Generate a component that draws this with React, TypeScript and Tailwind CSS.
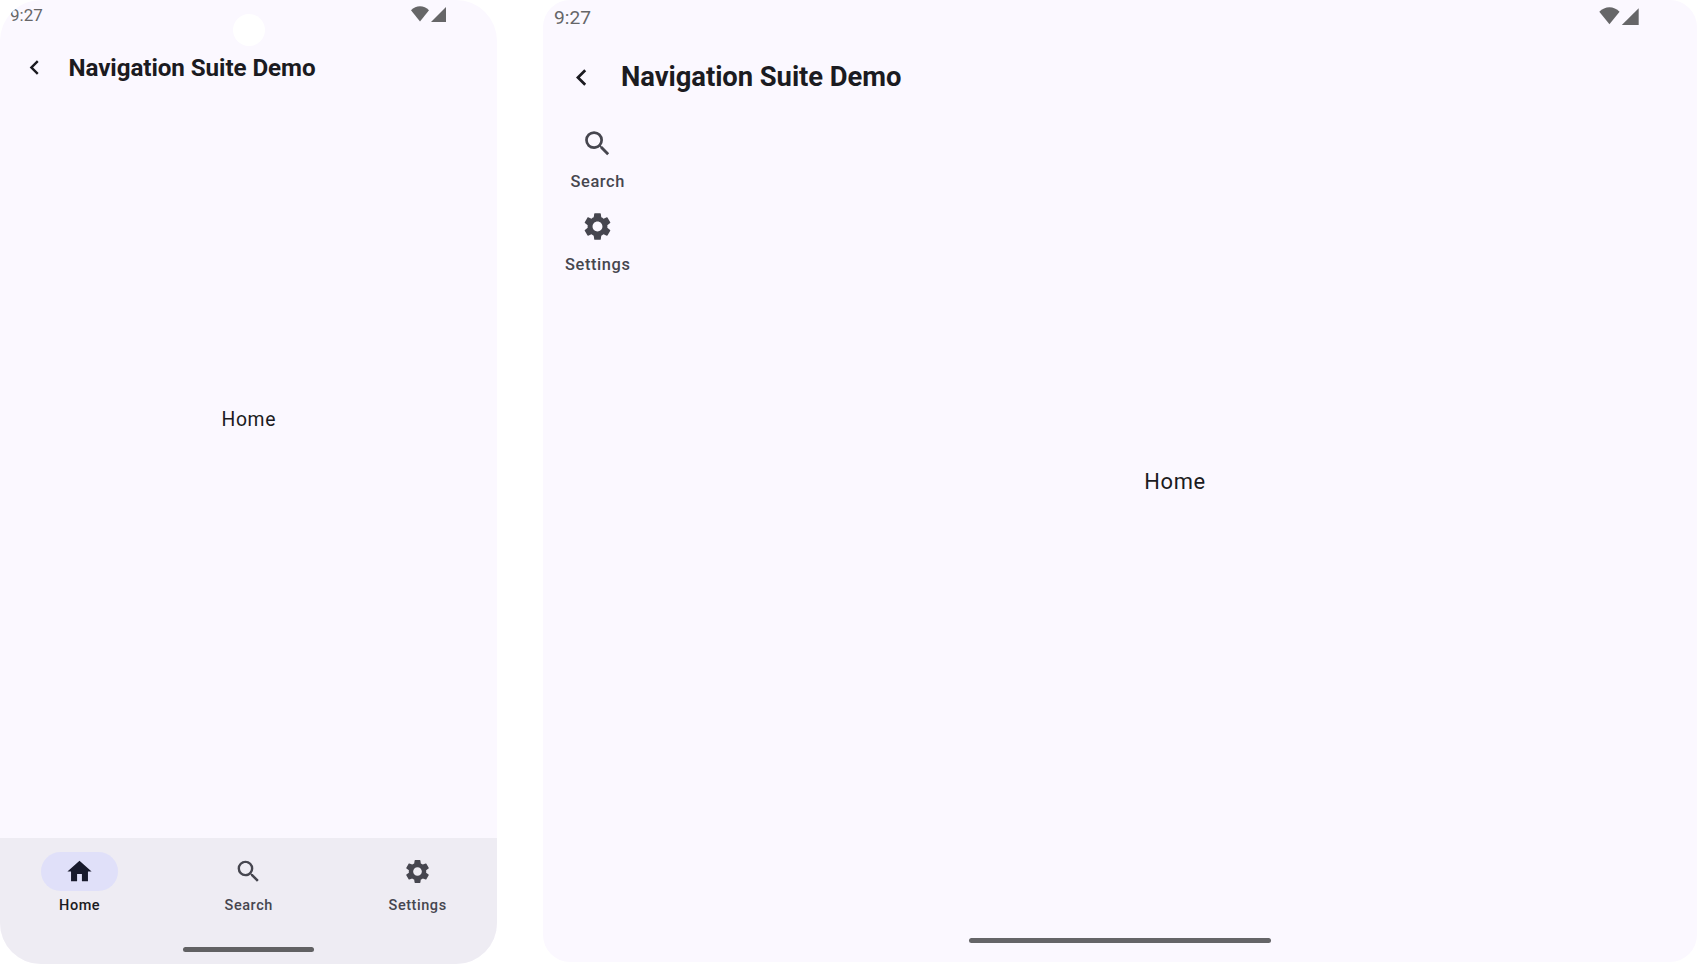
import { MdChevronLeft, MdHome, MdSearch, MdSettings } from "react-icons/md";

function StatusIcons({ className }: { className: string }) {
  return (
    <svg viewBox="0 0 35 16" className={className} fill="#666668" aria-hidden="true">
      <path d="M0 4.3C5-1.2 13-1.2 18 4.3L9 15.4z" />
      <path d="M35 1v15H20z" />
    </svg>
  );
}

function Phone() {
  return (
    <section className="relative flex h-[963.5px] w-[497px] shrink-0 flex-col overflow-hidden rounded-[41px] bg-[#fbf8ff]">
      <div className="absolute top-[14px] left-[232.5px] size-[32px] rounded-full bg-white" />
      <header className="flex h-[30px] shrink-0 items-center justify-between pr-[51.5px] pl-[10px]">
        <span className="text-[17px] leading-[30px] text-[#666668]">9:27</span>
        <StatusIcons className="mb-[3px] h-[16px] w-[35px]" />
      </header>
      <div className="flex h-[75px] shrink-0 items-center pl-[19.5px]">
        <MdChevronLeft className="size-[29px] text-[#1b1b21]" />
        <h1 className="ml-[20px] pt-px text-[24.2px] font-bold tracking-[-0.07px] whitespace-nowrap">
          Navigation Suite Demo
        </h1>
      </div>
      <main className="flex flex-1 items-center justify-center pb-[102px]">
        <p className="pl-[0.6px] text-[19.33px] tracking-[0.6px]">Home</p>
      </main>
      <nav className="flex h-[125.5px] shrink-0 flex-col bg-[#eeecf3] pt-[14px]">
        <div className="grid grid-cols-3 gap-[9.67px] text-[14.5px] leading-[20px] font-medium tracking-[0.55px] text-[#46464f]">
          <div className="flex flex-col items-center text-[#1b1b21]">
            <span className="flex h-[39px] w-[77px] items-center justify-center rounded-full bg-[#e0e0f9]">
              <MdHome className="size-[29px] text-[#181a2c]" />
            </span>
            <span className="mt-[5px]">Home</span>
          </div>
          <div className="flex flex-col items-center">
            <span className="flex h-[39px] items-center">
              <MdSearch className="size-[29px]" />
            </span>
            <span className="mt-[5px] pl-[0.5px]">Search</span>
          </div>
          <div className="flex flex-col items-center">
            <span className="flex h-[39px] items-center">
              <MdSettings className="size-[29px]" />
            </span>
            <span className="mt-[5px] pl-[0.5px]">Settings</span>
          </div>
        </div>
        <div className="mx-auto mt-[31px] h-[5px] w-[131px] rounded-full bg-[#616163]" />
      </nav>
    </section>
  );
}

function Tablet() {
  return (
    <section className="flex h-[962px] w-[1154px] shrink-0 flex-col overflow-hidden rounded-[27px] bg-[#fbf8ff]">
      <header className="flex h-[34px] shrink-0 items-center justify-between pr-[58.5px] pl-[11px]">
        <span className="pt-[2px] text-[19.2px] leading-[34px] text-[#666668]">9:27</span>
        <StatusIcons className="mb-[2px] h-[18px] w-[40px]" />
      </header>
      <div className="flex h-[86px] shrink-0 items-center pl-[21.5px]">
        <MdChevronLeft className="size-[33px] text-[#1b1b21]" />
        <h1 className="ml-[23.5px] pt-[2px] text-[27.4px] font-bold tracking-[-0.05px] whitespace-nowrap">
          Navigation Suite Demo
        </h1>
      </div>
      <div className="flex flex-1">
        <aside className="flex w-[109.5px] flex-col items-center pt-[7px] text-[16.4px] leading-[22px] font-medium tracking-[0.62px] text-[#46464f]">
          <div className="flex h-[82.5px] flex-col items-center">
            <MdSearch className="size-[33px]" />
            <span className="mt-[11px]">Search</span>
          </div>
          <div className="flex h-[82.5px] flex-col items-center">
            <MdSettings className="size-[33px]" />
            <span className="mt-[11px]">Settings</span>
          </div>
        </aside>
        <main className="flex flex-1 items-center justify-center pb-[93px]">
          <p className="pl-[0.5px] text-[21.9px] tracking-[0.68px]">Home</p>
        </main>
      </div>
      <div className="mx-auto mb-[19px] h-[5.5px] w-[302px] shrink-0 rounded-full bg-[#656568]" />
    </section>
  );
}

export default function App() {
  return (
    <div className="flex h-[964px] w-[1698px] gap-[46px] overflow-hidden bg-white font-['Roboto',sans-serif] text-[#1b1b21]">
      <Phone />
      <Tablet />
    </div>
  );
}
